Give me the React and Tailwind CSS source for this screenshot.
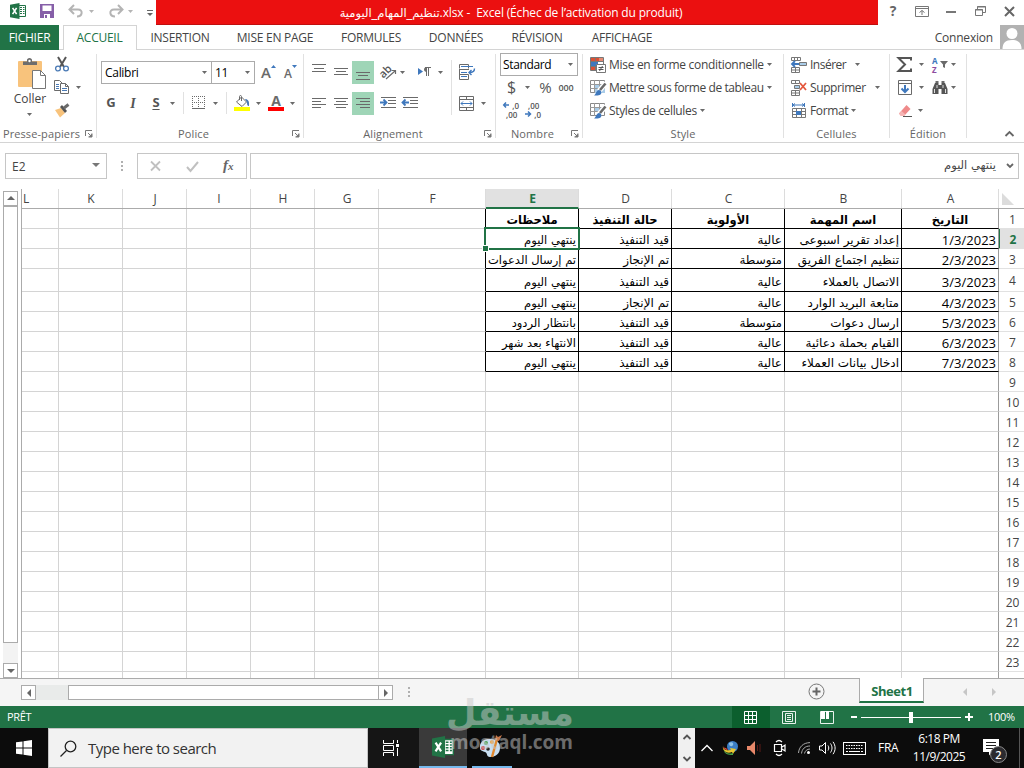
import React from 'react';
import clsx from 'clsx';

const GRID = 'grid grid-rows-[100%] grid-cols-[37px_64px_64px_64px_64px_64px_107px_93px_93px_113px_117px_97px_25px]';

const columns = ['L', 'K', 'J', 'I', 'H', 'G', 'F', 'E', 'D', 'C', 'B', 'A'];

const headings = ['ملاحظات', 'حالة التنفيذ', 'الأولوية', 'اسم المهمة', 'التاريخ'];

const tasks = [
  ['ينتهي اليوم', 'قيد التنفيذ', 'عالية', 'إعداد تقرير اسبوعى', '1/3/2023'],
  ['تم إرسال الدعوات', 'تم الإنجاز', 'متوسطة', 'تنظيم اجتماع الفريق', '2/3/2023'],
  ['ينتهي اليوم', 'قيد التنفيذ', 'عالية', 'الاتصال بالعملاء', '3/3/2023'],
  ['ينتهي اليوم', 'تم الإنجاز', 'عالية', 'متابعة البريد الوارد', '4/3/2023'],
  ['بانتظار الردود', 'قيد التنفيذ', 'متوسطة', 'ارسال دعوات', '5/3/2023'],
  ['الانتهاء بعد شهر', 'قيد التنفيذ', 'عالية', 'القيام بحملة دعائية', '6/3/2023'],
  ['ينتهي اليوم', 'قيد التنفيذ', 'عالية', 'ادخال بيانات العملاء', '7/3/2023'],
];

const tabs = [
  { label: 'INSERTION', width: 'w-[86px]' },
  { label: 'MISE EN PAGE', width: 'w-[104px]' },
  { label: 'FORMULES', width: 'w-[88px]' },
  { label: 'DONNÉES', width: 'w-[82px]' },
  { label: 'RÉVISION', width: 'w-[80px]' },
  { label: 'AFFICHAGE', width: 'w-[90px]' },
];

const Svg = ({ w = 16, h = 16, className, children }) => (
  <svg width={w} height={h} viewBox={`0 0 ${w} ${h}`} fill="none" className={clsx('shrink-0 overflow-visible', className)}>
    {children}
  </svg>
);

const Caret = ({ className, color = '#6a6a6a' }) => (
  <Svg w={5} h={3} className={className}>
    <path d="M0 0h5L2.500 3z" fill={color} />
  </Svg>
);

const Launcher = () => (
  <Svg w={8} h={8}>
    <path d="M.5 6V.5H7M3 3l3 3M7 3.500V7H3.500" stroke="#777" />
    <path d="M7 3.500V7H3.500z" fill="#777" />
  </Svg>
);

const ExcelIcon = ({ size = 16 }) => (
  <svg width={size} height={size} viewBox="0 0 16 16" fill="none" className="shrink-0">
    <path d="M8.500 2.500h7v11h-7z" fill="#fff" stroke="#217346" />
    <path d="M10 4.500h2M13 4.500h1.500M10 6.500h2M13 6.500h1.500M10 8.500h2M13 8.500h1.500M10 10.500h2M13 10.500h1.500" stroke="#217346" />
    <path d="M0 1.800L9.500 0v16L0 14.200z" fill="#217346" />
    <path d="M2.600 4.800l4 6.400M6.600 4.800l-4 6.400" stroke="#fff" strokeWidth="1.600" />
  </svg>
);

const Lines = ({ rows, color = '#6a6a6a', h = 16 }) => (
  <Svg w={14} h={h}>
    {rows.map(([x, y, w]) => (
      <rect key={y} x={x} y={y} width={w} height="1" fill={color} />
    ))}
  </Svg>
);

const PasteIcon = () => (
  <Svg w={30} h={32}>
    <rect x="2" y="3" width="24" height="26" rx="1" fill="#f8c37c" />
    <path d="M7 7V3.500h4V2c0-1 1-2 2.500-2S16 1 16 2v1.500h5V7z" fill="#6d6d6d" />
    <circle cx="13.500" cy="3" r="1.200" fill="#fff" />
    <path d="M16.500 12.500h8l5 5v13h-13z" fill="#fff" stroke="#777" />
    <path d="M24.500 12.500v5h5" stroke="#777" />
  </Svg>
);

const CutIcon = () => (
  <Svg w={14} h={15}>
    <path d="M3 0l6 10M11 0L5 10" stroke="#555" strokeWidth="2" />
    <circle cx="3" cy="11.500" r="2.400" stroke="#4a7ab5" strokeWidth="1.300" />
    <circle cx="11" cy="11.500" r="2.400" stroke="#4a7ab5" strokeWidth="1.300" />
  </Svg>
);

const CopyIcon = () => (
  <Svg w={16} h={15}>
    <path d="M.5.500h5l3 3v7h-8z" fill="#fff" stroke="#6a6a6a" />
    <path d="M2 4.500h3M2 6.500h3M2 8.500h3" stroke="#4a7ab5" />
    <path d="M6.500 3.500h5l3 3v7h-8z" fill="#fff" stroke="#6a6a6a" />
    <path d="M11.500 3.500v3h3" stroke="#6a6a6a" />
    <path d="M8 8.500h5M8 10.500h5" stroke="#4a7ab5" />
  </Svg>
);

const BrushIcon = () => (
  <Svg w={17} h={15}>
    <path d="M1 7l6-2 4 5-5 4.500z" fill="#f8c37c" />
    <path d="M6 4l2-2 5 6-2 2z" fill="#555" />
    <path d="M10 5l4.500-3.500" stroke="#6a6a6a" strokeWidth="3" />
  </Svg>
);

const BordersIcon = () => (
  <Svg w={14} h={14}>
    <path d="M.5 0v13M6.500 0v13M12.500 0v13M0 .5h13M0 6.500h13" stroke="#6a6a6a" strokeDasharray="1 1" />
    <path d="M0 12.500h13" stroke="#6a6a6a" />
  </Svg>
);

const FillIcon = () => (
  <Svg w={16} h={17}>
    <path d="M2.500 7l5-5 5 5-4.500 4.500z" fill="#fff" stroke="#6a6a6a" />
    <path d="M5.500 5V1.500c0-1.300 2-1.300 2 0V6" stroke="#6a6a6a" />
    <path d="M11 4c3 0 4.500 2 4 7-2 0-2-2-2-3.500z" fill="#4a7ab5" />
    <rect y="12" width="16" height="4" fill="#ffff00" />
  </Svg>
);

const FontColorIcon = () => (
  <div className="flex h-[17px] w-4 flex-col items-center">
    <span className="h-3 font-bold leading-3 text-[14px] text-[#6a6a6a]">A</span>
    <span className="h-1 w-4 bg-[#f00]" />
  </div>
);

const OrientationIcon = () => (
  <Svg w={17} h={16}>
    <text x="0" y="11" fontSize="11" fontWeight="600" fill="#555" transform="rotate(-45 6 9)">ab</text>
    <path d="M6 15l9-8M11.500 6.500H15.500V10" stroke="#6a6a6a" strokeWidth="1.200" />
  </Svg>
);

const DirectionIcon = () => (
  <Svg w={13} h={10}>
    <path d="M0 1l5 3.500L0 8z" fill="#3f78bd" />
    <path d="M8.500 1v8M10.500 1v8M7 .5h6" stroke="#6a6a6a" />
    <path d="M9 0v5C5 5 5 0 9 0z" fill="#6a6a6a" />
  </Svg>
);

const WrapIcon = () => (
  <Svg w={17} h={16}>
    <path d="M.5 4.500v-4h9v4M.5 6v9.500h9v-5" stroke="#6a6a6a" />
    <path d="M2 2.500h12M2 8.500h6M2 12.500h6" stroke="#3f78bd" />
    <path d="M0 5.500h10M.5 10.500h9" stroke="#6a6a6a" />
    <path d="M15.500 4.500c0 3-1.500 4-5 4M12.500 6l-2.500 2.500 2.500 2.500" stroke="#3f78bd" strokeWidth="1.400" />
  </Svg>
);

const MergeIcon = () => (
  <Svg w={15} h={15}>
    <path d="M.5.500h14v14H.5zM0 3.500h15M0 11.500h15M7.500 0v3.500M7.500 11.500V15" stroke="#6a6a6a" />
    <path d="M2 7.500h11M4 5.500l-2 2 2 2M11 5.500l2 2-2 2" stroke="#3f78bd" />
  </Svg>
);

const IndentIcon = ({ out }) => (
  <Svg w={16} h={12}>
    <path d="M1 .5h15M8 3.500h8M8 6.500h8M1 10.500h15" stroke="#6a6a6a" />
    {out ? (
      <path d="M7 5.500H1M3.500 2.500l-3 3 3 3" stroke="#3f78bd" strokeWidth="1.800" />
    ) : (
      <path d="M0 5.500h6M3.500 2.500l3 3-3 3" stroke="#3f78bd" strokeWidth="1.800" />
    )}
  </Svg>
);

const DecimalIcon = ({ add }) => (
  <div className="flex h-[18px] w-4 flex-col whitespace-nowrap text-[8px] font-semibold leading-[9px] text-[#555]">
    <div className="flex h-[9px] items-center justify-between">
      {add && <Svg w={6} h={6}><path d="M6 3H1M3 .5L.7 3 3 5.500" stroke="#3f78bd" strokeWidth="1.500" /></Svg>}
      <span className={clsx(!add && 'ml-[3px]')}>{add ? ',0' : ',00'}</span>
    </div>
    <div className="flex h-[9px] items-center justify-between">
      {!add && <Svg w={6} h={6}><path d="M0 3h5M3 .5L5.500 3 3 5.500" stroke="#3f78bd" strokeWidth="1.500" /></Svg>}
      <span className={clsx(add && 'ml-[3px]')}>{add ? ',00' : ',0'}</span>
    </div>
  </div>
);

const ConditionalIcon = () => (
  <Svg>
    <path d="M.5.500h13v13H.5zM0 4.500h13M0 9.500h13M5.500 0v13" stroke="#777" />
    <path d="M1 1h4v3H1zM6 1h3v3H6zM1 10h4v3H1z" fill="#dc5034" />
    <path d="M9 1h4v3H9z" fill="#e58a72" />
    <path d="M1 5h7v4H1z" fill="#3f78bd" />
    <path d="M6.500 7.500h9v8h-9z" fill="#fff" stroke="#777" />
    <path d="M8.500 10.500h5M8.500 12.500h5M12.500 9l-3 5" stroke="#555" />
  </Svg>
);

const TableStyleIcon = ({ cell }) => (
  <Svg>
    <path d="M.5.500h14v12H.5z" fill="#fff" stroke="#888" />
    <path d={cell ? 'M4 4h8v5H4z' : 'M5 4h10v9H5z'} fill="#a9cce8" />
    <path d="M0 4.500h15M0 8.500h15M4.500 0v13M9.500 0v13" stroke="#999" />
    <path d="M16 3l-7 8" stroke="#fff" strokeWidth="5" />
    <path d="M15.500 3.500L10 10" stroke="#6a6a6a" strokeWidth="2.600" />
    <path d="M4 15.500c2-1 2-5 5-5.500 2.500 0 3 3 1.500 4.500-1.500 1.300-4 1-6.500 1z" fill="#3f78bd" />
  </Svg>
);

const InsertIcon = () => (
  <Svg>
    <path d="M.5 3.500v-3h9v3M3.500 0v3.500M6.500 0v3.500M.5 3.500h9M.5 15.500v-5h8v5zM.5 13h8M4.500 10.500v5" stroke="#777" />
    <path d="M8.500 5.500h7v3h-7z" fill="#a9cce8" stroke="#777" />
    <path d="M8 7H2M4 4L1 7l3 3" stroke="#3f78bd" strokeWidth="1.800" />
  </Svg>
);

const DeleteIcon = () => (
  <Svg>
    <path d="M.5 3.500v-3h8v3zM4.500 0v3.500M.5 15.500v-5h8v5zM.5 13h8M4.500 10.500v5" stroke="#777" />
    <path d="M3.500 5.500h5v3h-5z" fill="#a9cce8" stroke="#777" />
    <path d="M9 3l6 7M15 3L9 10" stroke="#e4573d" strokeWidth="1.800" />
  </Svg>
);

const FormatIcon = () => (
  <Svg>
    <path d="M1.500 0v4M13.500 0v4M2 2h11M4 .5L2 2l2 1.500M11 .5L13 2l-2 1.500" stroke="#3f78bd" />
    <path d="M1.500 5.500h13v9h-13zM1 8.500h14M1 11.500h14M5.500 5v10M10.500 5v10" stroke="#777" />
    <path d="M5 8h5v4H5z" fill="#3f78bd" />
  </Svg>
);

const SigmaIcon = () => (
  <Svg w={15} h={15}>
    <path d="M14 3.500V1H1.500L8 7.500 1.500 14H14v-2.500" stroke="#555" strokeWidth="2" />
  </Svg>
);

const SortIcon = () => (
  <div className="flex h-[18px] items-center">
    <div className="flex w-[8px] flex-col text-[8px] font-bold leading-[9px]">
      <span className="text-[#3f78bd]">A</span>
      <span className="text-[#8d4ba0]">Z</span>
    </div>
    <Svg w={9} h={7}><path d="M0 0h8L5 3.500V7L3 6V3.500z" fill="#6a6a6a" /></Svg>
  </div>
);

const FillDownIcon = () => (
  <Svg w={14} h={15}>
    <path d="M.5.500h13v14H.5zM0 3.500h14" stroke="#6a6a6a" />
    <path d="M7 5v7M3.500 8.500L7 12l3.500-3.500" stroke="#3f78bd" strokeWidth="2" />
  </Svg>
);

const FindIcon = () => (
  <Svg w={16} h={14}>
    <path d="M3 2h3.500v2h3V2H13l2.500 6v5h-6V8h-3v5h-6V8z" fill="#555" />
    <path d="M3.500 0h3v2h-3zM9.500 0h3v2h-3z" fill="#6a6a6a" />
    <path d="M2.500 8v4M13.500 8v4M5 4v3M11 4v3" stroke="#ddd" />
  </Svg>
);

const EraserIcon = () => (
  <Svg w={15} h={14}>
    <path d="M8.500 1l4 4-6.500 7H3L1 9.500z" fill="#ef8a8a" />
    <path d="M1 9.500L3.500 7l4 3.500L6 12H3z" fill="#f5b5b5" />
    <path d="M5 12.500h9" stroke="#555" />
  </Svg>
);

const Group = ({ label, width, launcher, children }) => (
  <div className={clsx('flex shrink-0', width)}>
    <div className="flex min-w-0 flex-1 flex-col">
      <div className="h-[76px]">{children}</div>
      <div className="flex h-4 items-center text-[11px] text-[#666]">
        <span className="flex-1 whitespace-nowrap text-center tracking-[0.1px]">{label}</span>
        {launcher && <span className="w-[13px] shrink-0 pl-[2px]"><Launcher /></span>}
      </div>
    </div>
    <div className="my-1 w-px bg-[#e1e1e1]" />
  </div>
);

const Row = ({ className, children }) => (
  <div className={clsx('flex items-center', className)}>{children}</div>
);

const MenuItem = ({ icon, label, tracking = 'tracking-[-0.35px]', gap = 'ml-[3px]' }) => (
  <Row className="h-[23px] text-[12px] text-[#444]">
    {icon}
    <span className={clsx('ml-[3px] whitespace-nowrap', tracking)}>{label}</span>
    <Caret className={gap} />
  </Row>
);

const TitleBar = () => (
  <div className="flex h-[25px] items-center">
    <div className="flex w-[156px] items-center pb-[3px]">
      <div className="ml-[10px]"><ExcelIcon /></div>
      <Svg w={14} h={14} className="ml-[14px]">
        <path d="M0 0h14v14H0z" fill="#865fa8" />
        <path d="M2.500 1.500h9V7h-9zM4 10h6v4H4z" fill="#fff" />
        <path d="M5 11h2v3H5z" fill="#865fa8" />
      </Svg>
      <Svg w={16} h={14} className="ml-[14px]">
        <path d="M2 5.500h8c5.500 0 4.500 7-1 7M6 1L1.500 5.500 6 10" stroke="#b4b4b4" strokeWidth="2" />
      </Svg>
      <Caret className="ml-[5px]" color="#b4b4b4" />
      <Svg w={16} h={14} className="ml-[14px]">
        <path d="M14 5.500H6c-5.500 0-4.500 7 1 7M10 1l4.500 4.500L10 10" stroke="#b4b4b4" strokeWidth="2" />
      </Svg>
      <Caret className="ml-[4px]" color="#b4b4b4" />
      <Svg w={6} h={6} className="ml-[14px] mt-[3px]">
        <path d="M0 .5h6" stroke="#666" />
        <path d="M0 3h6L3 6z" fill="#666" />
      </Svg>
    </div>
    <div className="flex h-[25px] w-[722px] justify-center gap-[6px] whitespace-nowrap border-b border-[#c00f0f] bg-[#eb1010] pr-3 text-[12px] leading-[25px] text-white">
      <span dir="ltr" className="tracking-[-0.15px]">
        <bdi className="font-['DejaVu_Sans'] text-[11.5px] tracking-normal">تنظيم_المهام_اليومية</bdi>.xlsx -
      </span>
      <span className="tracking-[-0.17px]">Excel (Échec de l’activation du produit)</span>
    </div>
    <div className="flex flex-1 items-center pb-[3px] text-[#666]">
      <span className="ml-[10px] w-[10px] text-center text-[14px] font-bold leading-none">?</span>
      <Svg w={14} h={11} className="ml-[17px]">
        <path d="M.5.500h13v10H.5zM0 2.500h14M7 9V4.500M4.500 6.500L7 4.500l2.500 2" stroke="#777" />
      </Svg>
      <span className="ml-[17px] mt-[2px] h-[2px] w-[10px] bg-[#777]" />
      <Svg w={11} h={10} className="ml-[19px]">
        <path d="M2.500 3V.5h8v6H8M2 1h9M.5 3.500h7v6h-7zM0 4h8" stroke="#777" />
      </Svg>
      <Svg w={11} h={11} className="ml-[18px]">
        <path d="M1 1l9 9M10 1l-9 9" stroke="#666" strokeWidth="2" />
      </Svg>
    </div>
  </div>
);

const TabStrip = () => (
  <div className="flex h-[25px] items-stretch text-[12px] leading-[25px] tracking-[-0.25px] text-[#444]">
    <div className="w-[59px] bg-[#217346] text-center text-white">FICHIER</div>
    <div className="w-1 border-b border-[#d4d4d4]" />
    <div className="w-[74px] border border-b-0 border-[#d4d4d4] pr-px text-center leading-[24px] text-[#217346]">ACCUEIL</div>
    {tabs.map((tab) => (
      <div key={tab.label} className={clsx('border-b border-[#d4d4d4] text-center', tab.width)}>{tab.label}</div>
    ))}
    <div className="flex flex-1 items-center justify-end border-b border-[#d4d4d4]">
      <span className="mr-[7px] tracking-[-0.2px]">Connexion</span>
      <Svg w={24} h={24}>
        <path d="M0 0h24v24H0z" fill="#b2b2b2" />
        <circle cx="12" cy="8.500" r="5.500" fill="#fff" />
        <path d="M2.500 24c0-6 3-9 9.500-9s9.500 3 9.500 9z" fill="#fff" />
      </Svg>
    </div>
  </div>
);

const Ribbon = () => (
  <div className="flex h-[93px] border-b border-[#d4d4d4]">
    <Group label="Presse-papiers" width="w-[97px]" launcher>
      <div className="flex">
        <div className="ml-[9px] flex w-[42px] flex-col items-center pt-2">
          <div className="ml-[2px]"><PasteIcon /></div>
          <span className="mt-[1px] text-[12px] leading-4 text-[#444]">Coller</span>
          <Caret className="mt-[6px] -ml-px" />
        </div>
        <div className="ml-[3px] pt-[3px]">
          <Row className="h-[23px] pl-[1px]"><CutIcon /></Row>
          <Row className="h-[23px]"><CopyIcon /><Caret className="ml-[6px]" /></Row>
          <Row className="h-[23px]"><BrushIcon /></Row>
        </div>
      </div>
    </Group>

    <Group label="Police" width="w-[207px]" launcher>
      <Row className="pl-1 pt-[11px] text-[12px] text-black">
        <div className="flex h-[23px] w-[111px] items-center justify-between border border-[#ababab] pl-[3px] pr-[4px]"><span className="tracking-[-0.3px]">Calibri</span><Caret /></div>
        <div className="-ml-px flex h-[23px] w-[44px] items-center justify-between border border-[#ababab] pl-[3px] pr-[4px]"><span className="tracking-[-0.3px]">11</span><Caret /></div>
        <span className="ml-[6px] text-[15px] font-semibold leading-none text-[#6a6a6a]">A</span>
        <Svg w={5} h={3} className="mb-3"><path d="M0 3h5L2.500 0z" fill="#3f78bd" /></Svg>
        <span className="ml-[8px] mt-[2px] text-[12px] font-semibold leading-none text-[#6a6a6a]">A</span>
        <Svg w={5} h={3} className="mb-3"><path d="M0 0h5L2.500 3z" fill="#3f78bd" /></Svg>
      </Row>
      <Row className="mt-[7px] h-6 pl-[9px] text-[13px] text-[#555]">
        <span className="w-[10px] text-center font-bold">G</span>
        <span className="ml-[12px] w-[10px] text-center font-['Liberation_Serif'] text-[14px] font-bold italic">I</span>
        <span className="ml-[13px] w-[10px] text-center font-bold underline underline-offset-2">S</span>
        <Caret className="ml-[9px]" />
        <span className="ml-[8px] h-[22px] w-px bg-[#e1e1e1]" />
        <span className="ml-[8px]"><BordersIcon /></span>
        <Caret className="ml-[7px]" />
        <span className="ml-[8px] h-[22px] w-px bg-[#e1e1e1]" />
        <span className="ml-[7px]"><FillIcon /></span>
        <Caret className="ml-[6px]" />
        <span className="ml-[7px]"><FontColorIcon /></span>
        <Caret className="ml-[6px]" />
      </Row>
    </Group>

    <Group label="Alignement" width="w-[192px]" launcher>
      <div className="flex pt-[10px]">
        <div className="w-[147px]">
          <Row className="h-6 pl-2">
            <Lines rows={[[0, 0, 14], [2, 4, 10], [0, 7, 14]]} />
            <span className="ml-2"><Lines rows={[[0, 4, 14], [2, 7, 10], [0, 10, 14]]} /></span>
            <div className="ml-1 flex h-[23px] w-[22px] items-center justify-center bg-[#9fd5b7]">
              <Lines rows={[[0, 8, 14], [2, 11, 10], [0, 15, 14]]} />
            </div>
            <span className="ml-[6px]"><OrientationIcon /></span>
            <Caret className="ml-[3px]" />
            <span className="ml-[13px]"><DirectionIcon /></span>
            <Caret className="ml-[7px]" />
          </Row>
          <Row className="mt-[7px] h-6 pl-2">
            <Lines rows={[[0, 3, 14], [0, 6, 9], [0, 9, 14], [0, 12, 9]]} />
            <span className="ml-2"><Lines rows={[[0, 3, 14], [2, 6, 10], [0, 9, 14], [2, 12, 10]]} /></span>
            <div className="ml-1 flex h-[23px] w-[22px] items-center justify-center bg-[#9fd5b7]">
              <Lines rows={[[0, 3, 14], [4, 6, 10], [0, 9, 14], [4, 12, 10]]} />
            </div>
            <span className="ml-[6px]"><IndentIcon /></span>
            <span className="ml-[6px]"><IndentIcon out /></span>
          </Row>
        </div>
        <div className="h-[55px] w-px bg-[#e1e1e1]" />
        <div className="ml-[7px]">
          <Row className="h-6"><WrapIcon /></Row>
          <Row className="mt-[7px] h-6"><MergeIcon /><Caret className="ml-[7px]" /></Row>
        </div>
      </div>
    </Group>

    <Group label="Nombre" width="w-[87px]" launcher>
      <div className="pl-1 pt-[3px]">
        <div className="flex h-[23px] w-[78px] items-center justify-between border border-[#ababab] pl-[2px] pr-[4px] text-[12px] tracking-[-0.35px] text-black">
          Standard<Caret />
        </div>
        <Row className="h-[22px] pl-[7px] text-[#555]">
          <span className="text-[16px] leading-none">$</span>
          <Caret className="ml-[9px]" />
          <span className="ml-[9px] text-[15px] leading-none">%</span>
          <span className="ml-[7px] text-[9px] font-semibold leading-none tracking-[-0.2px]">000</span>
        </Row>
        <Row className="h-[23px] pl-[3px]">
          <DecimalIcon add />
          <span className="ml-[6px]"><DecimalIcon /></span>
        </Row>
      </div>
    </Group>

    <Group label="Style" width="w-[201px]">
      <div className="pl-[7px] pt-[3px]">
        <MenuItem icon={<ConditionalIcon />} label="Mise en forme conditionnelle" tracking="tracking-[-0.3px]" />
        <MenuItem icon={<TableStyleIcon />} label="Mettre sous forme de tableau" tracking="tracking-[-0.42px]" />
        <MenuItem icon={<TableStyleIcon cell />} label="Styles de cellules" />
      </div>
    </Group>

    <Group label="Cellules" width="w-[106px]">
      <div className="pl-[7px] pt-[3px]">
        <MenuItem icon={<InsertIcon />} label="Insérer" tracking="tracking-[-0.5px]" gap="ml-[9px]" />
        <MenuItem icon={<DeleteIcon />} label="Supprimer" tracking="tracking-[-0.4px]" gap="ml-[9px]" />
        <MenuItem icon={<FormatIcon />} label="Format" />
      </div>
    </Group>

    <Group label="Édition" width="w-[77px]">
      <div className="pl-[7px] pt-[3px]">
        <Row className="h-[23px]"><SigmaIcon /><Caret className="ml-[7px]" /><span className="ml-[8px]"><SortIcon /></span><Caret className="ml-[2px]" /></Row>
        <Row className="h-[23px] pl-[1px]"><FillDownIcon /><Caret className="ml-[7px]" /><span className="ml-[8px]"><FindIcon /></span><Caret className="ml-[3px]" /></Row>
        <Row className="h-[23px] pl-[1px]"><EraserIcon /><Caret className="ml-[5px]" /></Row>
      </div>
    </Group>

    <div className="flex flex-1 items-end justify-end pb-[5px] pr-[10px]">
      <Svg w={9} h={6}><path d="M.5 5l4-4 4 4" stroke="#666" strokeWidth="1.800" /></Svg>
    </div>
  </div>
);

const Dots = ({ className }) => (
  <div className={clsx('flex flex-col gap-[2px]', className)}>
    <span className="size-[2px] bg-[#b0b0b0]" />
    <span className="size-[2px] bg-[#b0b0b0]" />
    <span className="size-[2px] bg-[#b0b0b0]" />
  </div>
);

const FormulaBar = () => (
  <div className="flex h-[46px] items-start pl-[5px] pt-[10px] text-[12px] text-[#444]">
    <div className="flex h-[26px] w-[102px] items-center justify-between border border-[#c6c6c6] pl-[6px] pr-[6px]">
      <span className="pt-px">E2</span>
      <Svg w={8} h={4} className="mb-[3px]"><path d="M0 0h8L4 4z" fill="#777" /></Svg>
    </div>
    <Dots className="ml-[14px] mt-2" />
    <div className="ml-[14px] flex h-[26px] w-[110px] items-center border border-[#c6c6c6]">
      <Svg w={11} h={10} className="ml-[12px]"><path d="M1 .5l9 9M10 .5l-9 9" stroke="#c0c0c0" strokeWidth="1.800" /></Svg>
      <Svg w={13} h={11} className="ml-[25px]"><path d="M1 6l3.500 4L12 1" stroke="#c0c0c0" strokeWidth="2" /></Svg>
      <span className="mb-[1px] ml-[24px] font-['Liberation_Serif'] text-[15px] font-bold italic leading-none text-[#666]">
        f<span className="text-[11px]">x</span>
      </span>
    </div>
    <div className="ml-[3px] flex h-[26px] w-[769px] items-center justify-end border border-[#c6c6c6] pr-[4px]">
      <span dir="rtl" className="font-['DejaVu_Sans'] text-[11.5px]">ينتهي اليوم</span>
      <Svg w={8} h={6} className="ml-[10px]"><path d="M1 1l3 3 3-3" stroke="#666" strokeWidth="1.800" /></Svg>
    </div>
  </div>
);

const VerticalScroll = () => (
  <div className="flex w-[22px] flex-col border-r border-[#ababab] pl-[3px] pt-[2px]">
    <div className="flex h-[15px] w-[15px] items-center justify-center border border-[#ababab]">
      <Svg w={8} h={4}><path d="M0 4h8L4 0z" fill="#666" /></Svg>
    </div>
    <div className="h-[438px] w-[15px] border border-[#ababab] bg-white" />
    <div className="h-5 w-[15px] bg-[#f3f3f3]" />
    <div className="flex h-[15px] w-[15px] items-center justify-center border border-[#ababab]">
      <Svg w={8} h={4}><path d="M0 0h8L4 4z" fill="#666" /></Svg>
    </div>
  </div>
);

const SheetRow = ({ number }) => {
  const inTable = number <= 8;
  const height = number === 4 ? 'h-[23px]' : number === 24 ? 'h-[6px]' : 'h-5';
  const values = number === 1 ? headings : tasks[number - 2];

  return (
    <div className={clsx(GRID, height)}>
      {columns.map((column, index) => {
        const cell = inTable && index >= 7 ? values[index - 7] : null;
        const selected = number === 2 && column === 'E';
        const isDate = column === 'A' && number > 1;
        return (
          <div
            key={column}
            dir="rtl"
            className={clsx(
              'relative flex items-center whitespace-nowrap border-r leading-4 text-black',
              number !== 24 && 'border-b',
              cell ? 'border-b-black' : 'border-b-[#d4d4d4]',
              inTable && index >= 6 && column !== 'A' ? 'border-r-black' : column === 'A' ? 'border-r-[#9b9b9b]' : 'border-r-[#d4d4d4]',
              number === 1 ? "justify-center font-['DejaVu_Sans'] text-[11.5px] font-bold" : 'pr-[2px]',
              number > 1 && !isDate && "font-['DejaVu_Sans']",
              number > 1 && !isDate && (column === 'E' ? 'text-[11.5px]' : 'text-[12px]'),
              isDate && 'text-[13px]',
              number === 4 ? 'pt-[4px]' : 'pt-[2px]'
            )}
          >
            {isDate ? <bdi dir="ltr">{cell}</bdi> : cell}
            {selected && (
              <>
                <span className="absolute -left-[2px] -right-[2px] -bottom-[2px] -top-[2px] z-10 border-2 border-[#217346]" />
                <span className="absolute -bottom-[3px] -left-[3px] z-10 size-[5px] bg-[#217346] outline outline-1 outline-white" />
              </>
            )}
          </div>
        );
      })}
      <div
        className={clsx(
          'flex items-center justify-center overflow-hidden border-[#e1e1e1] pl-[2px] pt-[2px] text-[12px] leading-4',
          number !== 24 && 'border-b',
          number === 2 ? '-ml-px border-l-2 border-l-[#217346] bg-[#e1e1e1] font-bold text-[#217346]' : 'text-[#444]'
        )}
      >
        {number !== 24 && number}
      </div>
    </div>
  );
};

const Sheet = () => (
  <div className="flex h-[490px] border-b border-[#ababab]">
    <VerticalScroll />
    <div className="flex-1">
      <div className={clsx(GRID, 'h-5 border-b border-[#ababab] text-[12px] leading-[19px] text-[#444]')}>
        {columns.map((column) => (
          <div
            key={column}
            className={clsx(
              'border-r border-[#dcdcdc] pl-px',
              column !== 'L' && 'text-center',
              column === 'E' && '-mb-px border-b-2 border-b-[#217346] bg-[#e1e1e1] font-bold text-[#217346]'
            )}
          >
            {column}
          </div>
        ))}
        <Svg w={12} h={12} className="ml-[3px] mt-[4px]"><path d="M0 0v12h12z" fill="#dcdcdc" /></Svg>
      </div>
      {Array.from({ length: 24 }, (_, i) => (
        <SheetRow key={i} number={i + 1} />
      ))}
    </div>
  </div>
);

const SheetTabs = () => (
  <div className="flex h-[27px] items-start bg-[#f5f5f5]">
    <div className="ml-[21px] mt-[6px] flex h-[15px]">
      <div className="flex w-[15px] items-center justify-center border border-[#ababab] bg-white">
        <Svg w={4} h={8}><path d="M4 0v8L0 4z" fill="#666" /></Svg>
      </div>
      <div className="w-8 bg-[#e9ebea]" />
      <div className="w-[311px] border border-[#ababab] bg-white" />
      <div className="-ml-px flex w-[15px] items-center justify-center border border-[#ababab] bg-white">
        <Svg w={4} h={8}><path d="M0 0v8l4-4z" fill="#666" /></Svg>
      </div>
    </div>
    <Dots className="ml-[15px] mt-2" />
    <Svg w={17} h={17} className="ml-[398px] mt-[4px]">
      <circle cx="8.500" cy="8.500" r="7.500" stroke="#777" />
      <path d="M8.500 4.500v8M4.500 8.500h8" stroke="#666" strokeWidth="2" />
    </Svg>
    <div className="-mt-px ml-[34px] h-[25px] w-[65px] border-x border-b-2 border-x-[#ababab] border-b-[#217346] bg-white pl-px pt-px text-center text-[13px] font-bold leading-[25px] tracking-[-0.4px] text-[#217346]">
      Sheet1
    </div>
    <Svg w={4} h={8} className="ml-[39px] mt-[9px]"><path d="M4 0v8L0 4z" fill="#c6c6c6" /></Svg>
    <Svg w={4} h={8} className="ml-[25px] mt-[9px]"><path d="M0 0v8l4-4z" fill="#c6c6c6" /></Svg>
  </div>
);

const StatusBar = () => (
  <div className="flex h-[22px] items-center bg-[#217346] text-[11px] text-white">
    <span className="w-[732px] pl-[7px] tracking-[-0.3px]">PRÊT</span>
    <div className="flex h-full w-[38px] items-center justify-center bg-[#0c5f2e] pr-px">
      <Svg w={13} h={13}><path d="M.5.500h12v12H.5zM4.500 0v13M8.500 0v13M0 4.500h13M0 8.500h13" stroke="#fff" /></Svg>
    </div>
    <Svg w={14} h={13} className="ml-3">
      <path d="M.5.500h13v12H.5zM3.500 2.500h7v8h-7zM5 4.500h4M5 6.500h4M5 8.500h4" stroke="#e8f2ec" />
    </Svg>
    <Svg w={14} h={13} className="ml-6">
      <path d="M.5.500h13v12H.5z" stroke="#e8f2ec" />
      <path d="M1 0h4v8H1zM6 0h3v8H6zM10 0h3v1h-3z" fill="#fff" />
    </Svg>
    <span className="ml-[17px] h-[2px] w-[6px] bg-white" />
    <div className="ml-1 flex h-[11px] w-[100px] items-center">
      <span className="h-px w-12 bg-white" />
      <span className="h-[11px] w-1 bg-white" />
      <span className="h-px flex-1 bg-white" />
    </div>
    <Svg w={8} h={8} className="ml-1"><path d="M4 0v8M0 4h8" stroke="#fff" strokeWidth="2" /></Svg>
    <span className="ml-[15px] tracking-[-0.3px]">100%</span>
  </div>
);

const Taskbar = () => (
  <div className="flex h-10 items-center bg-[#0c0c0c] text-white">
    <div className="flex w-12 items-center justify-center">
      <Svg>
        <path d="M0 2.300L6.500 1.400v6.100H0zM7.500 1.200L16 0v7.500H7.500zM0 8.500h6.500v6.100L0 13.700zM7.500 8.500H16V16l-8.500-1.200z" fill="#fff" />
      </Svg>
    </div>
    <div className="flex h-full w-80 items-center border border-[#c4c4c4] bg-[#f2f2f2] pl-[11px]">
      <Svg w={17} h={17}>
        <circle cx="10.500" cy="6.500" r="5.300" stroke="#222" strokeWidth="1.300" />
        <path d="M6.500 10.500L.5 16.500" stroke="#222" strokeWidth="1.300" />
      </Svg>
      <span className="ml-[11px] text-[15px] tracking-[-0.52px] text-[#333]">Type here to search</span>
    </div>
    <div className="flex h-full w-[51px] items-center bg-[#151515] pl-[15px]">
      <Svg w={17} h={16}>
        <path d="M.5 0v3.500h10V0M.5 16v-3.500h10V16M.5 5.500h10v5H.5zM14.500 0v3M14.500 8v8" stroke="#fff" />
        <path d="M13 4h3v3h-3z" fill="#fff" />
      </Svg>
    </div>
    <div className="flex h-full w-12 items-center justify-center border-b-2 border-[#76b9ed] bg-[#3a3a3a]">
      <ExcelIcon size={22} />
    </div>
    <div className="ml-[5px] flex h-full w-10 items-center justify-center border-b-2 border-[#76b9ed]">
      <Svg w={24} h={24} className="-ml-1">
        <path d="M2 13C1 7 7 3 13 4c6 0 9 4 9 9 0 6-5 9-10 9-4 0-2-4-5-5-2-1-5-1-5-4z" fill="#c9dff2" />
        <circle cx="5" cy="13" r="2" fill="#d33b3b" />
        <circle cx="8" cy="8" r="2" fill="#48a35b" />
        <circle cx="14" cy="7" r="2" fill="#e8a33b" />
        <circle cx="10" cy="14" r="1.800" fill="#222" />
        <path d="M19 4l-5 18" stroke="#e2882e" strokeWidth="2.400" />
        <path d="M18 0l2 2 4-2-3 6-4-1z" fill="#c8794c" />
      </Svg>
    </div>
    <div className="ml-[166px] flex h-full w-[17px] flex-col items-center justify-between bg-[#f0f0f0] py-[6px]">
      <Svg w={8} h={6}><path d="M.5 5L4 1.500 7.500 5" stroke="#555" strokeWidth="1.800" /></Svg>
      <Svg w={8} h={6}><path d="M.5 1L4 4.500 7.500 1" stroke="#555" strokeWidth="1.800" /></Svg>
    </div>
    <Svg w={12} h={8} className="ml-[6px]"><path d="M.5 7L6 1.500 11.500 7" stroke="#fff" strokeWidth="1.300" /></Svg>
    <Svg w={16} h={14} className="ml-[10px]">
      <circle cx="9.500" cy="5.500" r="5.500" fill="#3c7fc4" />
      <path d="M6 2c3-2 5 0 4 2s-4 2-4-2z" fill="#8fc3e8" />
      <path d="M0 5c0 4 4 5 8 4l-1-2 6 1-3 5-1-2C4 13-1 10 0 5z" fill="#e9c62f" />
      <path d="M1 9c2 4 5 4 9 3v2c-5 0-9-1-9-5z" fill="#4ba34a" />
      <path d="M0 4c0 2 1 3 3 3l2 2C2 9 0 7 0 4z" fill="#d9453a" />
    </Svg>
    <Svg w={14} h={14} className="ml-2">
      <path d="M0 5h3l5-5v14L3 9H0z" fill="#e8886a" />
      <path d="M10.500 4v6M13 3v8" stroke="#5c1a16" />
    </Svg>
    <Svg w={12} h={16} className="ml-[13px]">
      <path d="M.5 4.500h7v7h-7zM8 7l3-2v6L8 9M2 2C4 0 6 0 8 2M2 14c2 2 4 2 6 0" stroke="#fff" strokeWidth="1.200" />
    </Svg>
    <Svg w={13} h={12} className="ml-[12px]">
      <path d="M.5 11C1 5 5 .8 12 .6M3.500 11.500C4 7 7 4 12 4M6.500 11.500c.5-2.500 2.500-4.500 5.500-4.500" stroke="#aaa" />
      <circle cx="10.500" cy="10.500" r="1.500" fill="#fff" />
    </Svg>
    <Svg w={17} h={14} className="ml-[8px]">
      <path d="M.5 5H3l3.500-3.500v11L3 9H.5zM9 4.500c1 1.500 1 3.500 0 5M11.500 2.500c2 3 2 6 0 9M14 .8c2.800 4 2.800 8.400 0 12.400" stroke="#fff" />
    </Svg>
    <Svg w={23} h={13} className="ml-[7px]">
      <rect x=".5" y=".5" width="22" height="12" stroke="#fff" />
      <path d="M3 3.500h17M3 6.500h17" stroke="#fff" strokeDasharray="1.500 1" />
      <path d="M3 9.500h2M6 9.500h11M18 9.500h2" stroke="#fff" />
    </Svg>
    <span className="ml-[12px] w-[22px] text-[12px] tracking-[-0.3px]">FRA</span>
    <div className="ml-[10px] flex w-[58px] flex-col items-center whitespace-nowrap text-[12px] leading-[18px] tracking-[-0.5px]">
      <span>6:18 PM</span>
      <span>11/9/2025</span>
    </div>
    <div className="relative ml-[15px] h-[18px] w-[16px]">
      <Svg w={17} h={17}>
        <path d="M0 0h16v13H9l-3 3.500V13H0z" fill="#fff" />
        <path d="M3 3.500h10M3 6.500h10M3 9.500h7" stroke="#222" />
      </Svg>
      <span className="absolute left-[7px] top-[7px] flex size-[17px] items-center justify-center rounded-full border border-[#888] bg-[#2b2b2f] text-[11px] font-semibold leading-none">2</span>
    </div>
    <span className="ml-auto mr-1 h-full w-px bg-[#555]" />
  </div>
);

const Watermark = () => (
  <div className="pointer-events-none absolute left-[449px] top-[694px] w-[125px] text-center text-[#c9c9c9] opacity-50">
    <div dir="rtl" className="h-[38px] whitespace-nowrap font-['DejaVu_Sans'] text-[35px] font-bold leading-[38px]">مستقل</div>
    <div className="h-5 whitespace-nowrap text-[19px] font-bold leading-5">mostaql.com</div>
  </div>
);

const App = () => (
  <div className="relative h-[768px] w-[1024px] overflow-hidden bg-white font-['Open_Sans','Noto_Sans','DejaVu_Sans',sans-serif]">
    <TitleBar />
    <TabStrip />
    <Ribbon />
    <FormulaBar />
    <Sheet />
    <SheetTabs />
    <StatusBar />
    <Taskbar />
    <Watermark />
  </div>
);

export default App;
